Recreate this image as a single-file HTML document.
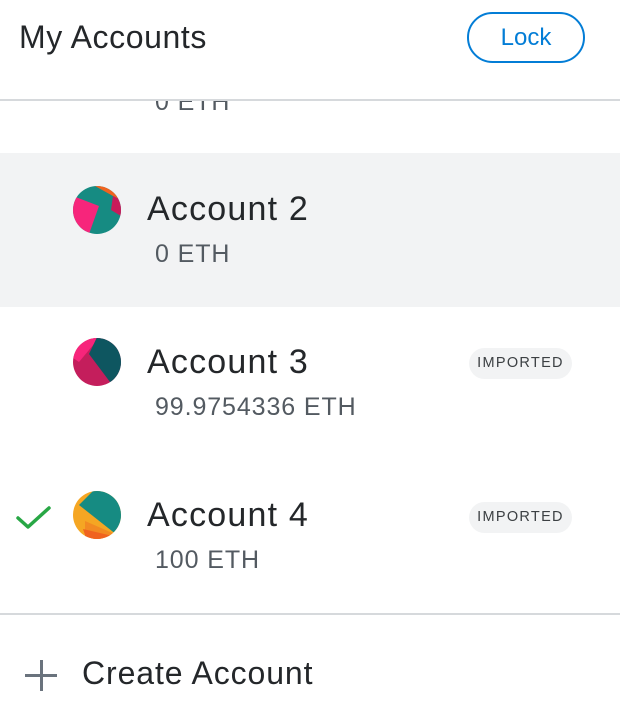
<!DOCTYPE html>
<html><head><style>
body{margin:0;width:620px;height:726px;overflow:hidden;background:#fff;font-family:"Liberation Sans",sans-serif;position:relative}
.a{position:absolute;white-space:nowrap}
.name{font-size:34px;letter-spacing:1.2px;color:#24272a}
.bal{font-size:25px;letter-spacing:0.9px;color:#535a61}
.badge{position:absolute;left:469px;width:103px;height:31px;border-radius:16px;background:#f2f3f4;color:#3c4043;font-size:14.5px;letter-spacing:1.3px;text-align:center;line-height:31px}
</style></head><body>
<div class="a" style="left:19px;top:19px;font-size:32px;letter-spacing:0.6px;color:#24272a">My Accounts</div>
<div class="a" style="left:467px;top:12px;width:114px;height:47px;border:2px solid #037dd6;border-radius:26px;color:#037dd6;font-size:24px;text-align:center;line-height:47px">Lock</div>
<div class="a" style="left:0;top:101px;width:620px;height:12px;overflow:hidden"><div class="bal" style="position:absolute;left:155px;top:-13px">0 ETH</div></div>
<div class="a" style="left:0;top:99px;width:620px;height:2px;background:#d6d9dc"></div>
<div class="a" style="left:0;top:153px;width:620px;height:154px;background:#f2f3f4"></div>

<svg class="a" style="left:73px;top:186px" width="48" height="48"><defs><clipPath id="c1"><circle cx="24" cy="24" r="24"/></clipPath></defs><g clip-path="url(#c1)"><rect width="48" height="48" fill="#168b82"/><polygon points="22,0 48,0 48,14 40,10" fill="#f0631f"/><polygon points="40,10 48,14 48,30 38,24" fill="#c81b5a"/><polygon points="0,10 26,20 16,48 0,48" fill="#f7257b"/></g></svg>
<div class="a name" style="left:147px;top:190px">Account 2</div>
<div class="a bal" style="left:155px;top:240px">0 ETH</div>

<svg class="a" style="left:73px;top:338px" width="48" height="48"><defs><clipPath id="c2"><circle cx="24" cy="24" r="24"/></clipPath></defs><g clip-path="url(#c2)"><rect width="48" height="48" fill="#c41e5c"/><polygon points="0,0 26,0 6,24 0,20" fill="#f7257b"/><polygon points="26,-5 60,-5 60,40 40,48 16,16" fill="#0e5660"/></g></svg>
<div class="a name" style="left:147px;top:343px">Account 3</div>
<div class="a bal" style="left:155px;top:393px">99.9754336 ETH</div>
<div class="badge" style="top:348px">IMPORTED</div>

<svg class="a" style="left:15px;top:503px" width="38" height="28"><polyline points="3,15 13,24 34,5" fill="none" stroke="#28a745" stroke-width="3.5" stroke-linecap="round" stroke-linejoin="round"/></svg>
<svg class="a" style="left:73px;top:491px" width="48" height="48"><defs><clipPath id="c3"><circle cx="24" cy="24" r="24"/></clipPath></defs><g clip-path="url(#c3)"><rect width="48" height="48" fill="#f5a623"/><polygon points="12,30 44,44 40,48 12,48" fill="#f28a22"/><polygon points="10,38 44,46 40,50 14,50" fill="#f0631f"/><polygon points="6,14 22,-2 60,-2 60,48 44,44" fill="#168b82"/></g></svg>
<div class="a name" style="left:147px;top:496px">Account 4</div>
<div class="a bal" style="left:155px;top:546px">100 ETH</div>
<div class="badge" style="top:502px">IMPORTED</div>

<div class="a" style="left:0;top:613px;width:620px;height:2px;background:#d6d9dc"></div>
<div class="a" style="left:25px;top:674px;width:32px;height:3px;background:#6a737d"></div>
<div class="a" style="left:40px;top:660px;width:3px;height:31px;background:#6a737d"></div>
<div class="a" style="left:82px;top:655px;font-size:32px;letter-spacing:0.9px;color:#24272a">Create Account</div>
</body></html>
